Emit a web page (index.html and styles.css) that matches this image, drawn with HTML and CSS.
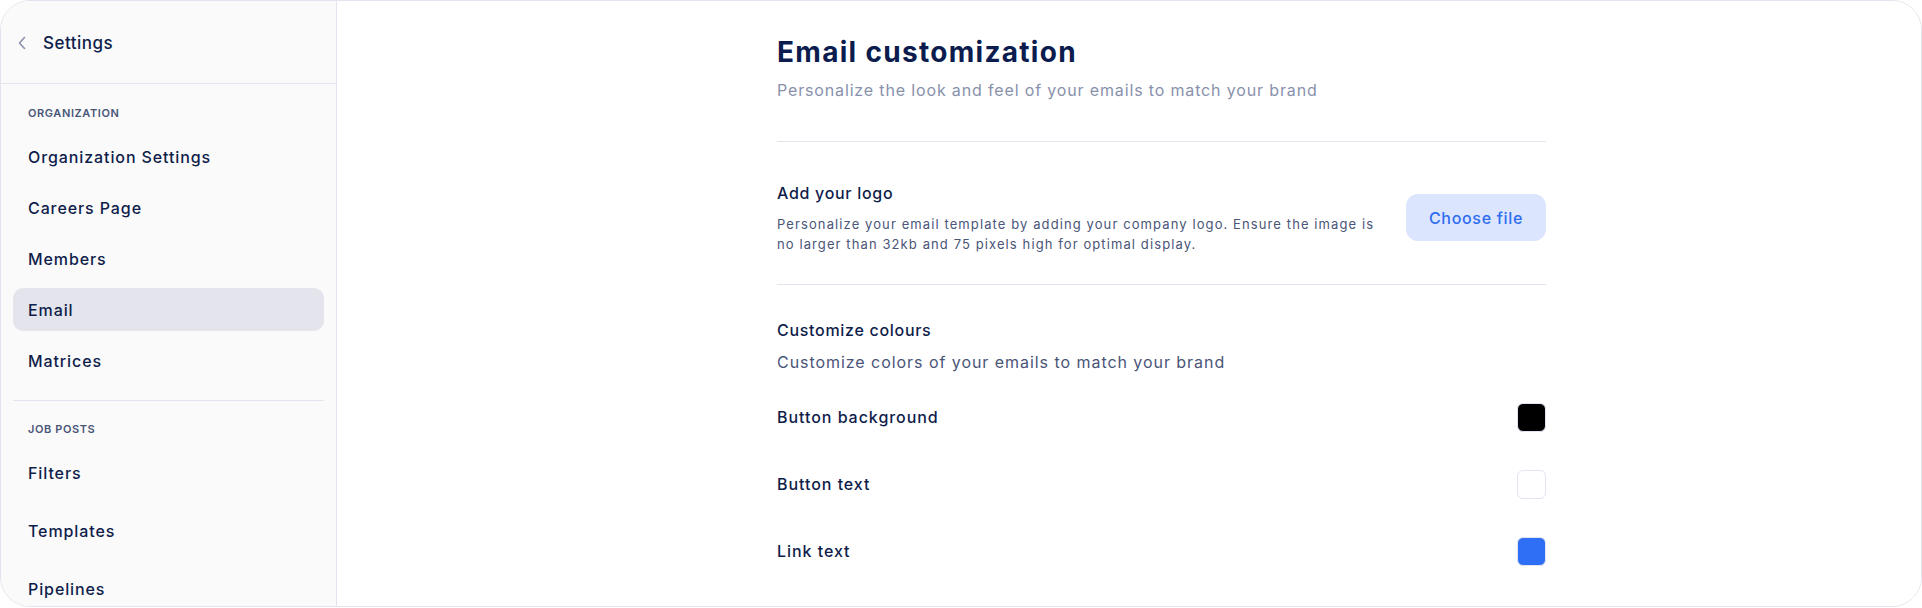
FILE: index.html
```html
<!DOCTYPE html>
<html lang="en">
<head>
<meta charset="utf-8">
<title>Email customization</title>
<link rel="stylesheet" href="styles.css">
</head>
<body>
<div class="frame">
  <aside class="sidebar">
    <div class="side-header">
      <svg class="chev" width="10" height="14" viewBox="0 0 10 14" fill="none"><path d="M7.5 1.5 L2.5 7 L7.5 12.5" stroke="#8a91aa" stroke-width="1.6" stroke-linecap="round" stroke-linejoin="round"/></svg>
      <span class="side-title">Settings</span>
    </div>
    <nav class="nav">
      <div class="nav-label">ORGANIZATION</div>
      <ul class="nav-list">
        <li class="nav-item">Organization Settings</li>
        <li class="nav-item">Careers Page</li>
        <li class="nav-item">Members</li>
        <li class="nav-item active">Email</li>
        <li class="nav-item">Matrices</li>
      </ul>
      <div class="nav-divider"></div>
      <div class="nav-label">JOB POSTS</div>
      <ul class="nav-list wide">
        <li class="nav-item">Filters</li>
        <li class="nav-item">Templates</li>
        <li class="nav-item">Pipelines</li>
      </ul>
    </nav>
  </aside>
  <main class="main">
    <div class="content">
      <h1 class="title">Email customization</h1>
      <p class="subtitle">Personalize the look and feel of your emails to match your brand</p>
      <section class="section logo-section">
        <div class="logo-text">
          <h2 class="sec-title">Add your logo</h2>
          <p class="sec-desc">Personalize your email template by adding your company logo. Ensure the image is no larger than 32kb and 75 pixels high for optimal display.</p>
        </div>
        <button class="choose-btn">Choose file</button>
      </section>
      <section class="section colors-section">
        <h2 class="sec-title">Customize colours</h2>
        <p class="sec-sub">Customize colors of your emails to match your brand</p>
        <div class="color-rows">
          <div class="color-row"><span class="color-label">Button background</span><span class="swatch swatch-black"></span></div>
          <div class="color-row"><span class="color-label">Button text</span><span class="swatch swatch-white"></span></div>
          <div class="color-row"><span class="color-label">Link text</span><span class="swatch swatch-blue"></span></div>
        </div>
      </section>
    </div>
  </main>
</div>
</body>
</html>
```
FILE: styles.css
```css
* { box-sizing: border-box; }
html, body { margin: 0; padding: 0; background: #ffffff; }
body {
  font-family: "Inter", "Noto Sans", sans-serif;
  color: #0f1d4a;
  height: 608px;
  overflow: hidden;
}
.frame {
  height: 607px;
  border: 1px solid #e3e5ee;
  border-radius: 30px;
  display: flex;
  overflow: hidden;
  background: #ffffff;
}
.sidebar {
  width: 336px;
  flex: none;
  background: #fafafb;
  border-right: 1px solid #e3e5ee;
}
.side-header {
  height: 83px;
  border-bottom: 1px solid #e3e5ee;
  display: flex;
  align-items: center;
  padding-left: 16px;
  padding-top: 2px;
}
.chev { display: block; margin-right: 16px; }
.side-title {
  font-size: 17px;
  font-weight: 500;
  letter-spacing: 0.5px;
  color: #0f1d4a;
}
.nav { padding: 21px 12px 0 12px; }
.nav-label {
  font-size: 11px;
  line-height: 16px;
  font-weight: 600;
  color: #4a5578;
  letter-spacing: 0.6px;
  padding-left: 15px;
}
.nav-list {
  list-style: none;
  margin: 14px 0 0 0;
  padding: 0;
  display: flex;
  flex-direction: column;
  gap: 8px;
}
.nav-list.wide { gap: 15px; }
.nav-item {
  height: 43px;
  display: flex;
  align-items: center;
  padding-left: 15px;
  border-radius: 10px;
  font-size: 16px;
  font-weight: 500;
  letter-spacing: 0.9px;
  color: #0f1d4a;
}
.nav-item.active { background: #e4e5ec; }
.nav-divider {
  height: 1px;
  background: #e3e5ee;
  margin: 18px 0 20px 0;
}
.main {
  flex: 1;
  background: #ffffff;
}
.content {
  width: 769px;
  margin-left: 440px;
  padding-top: 33px;
}
.title {
  margin: 0;
  font-size: 28px;
  line-height: 36px;
  font-weight: 700;
  letter-spacing: 1.3px;
  color: #0c1c4e;
}
.subtitle {
  margin: 8px 0 0 0;
  font-size: 16px;
  line-height: 24px;
  letter-spacing: 0.85px;
  color: #8891ab;
  padding-bottom: 39px;
  border-bottom: 1px solid #e3e5ee;
}
.section { border-bottom: 1px solid #e3e5ee; }
.logo-section {
  display: flex;
  align-items: center;
  justify-content: space-between;
  padding: 39px 0 30px 0;
}
.logo-text { width: 614px; }
.sec-title {
  margin: 0;
  font-size: 16px;
  line-height: 24px;
  font-weight: 500;
  letter-spacing: 0.7px;
  color: #0f1d4a;
}
.sec-desc {
  margin: 9px 0 0 0;
  font-size: 13px;
  line-height: 20px;
  letter-spacing: 1.1px;
  color: #4a5578;
}
.choose-btn {
  width: 140px;
  height: 47px;
  border: none;
  border-radius: 12px;
  background: #dbe5fd;
  color: #2f6df0;
  font-family: inherit;
  font-size: 16px;
  font-weight: 500;
  letter-spacing: 0.7px;
  padding: 0;
}
.colors-section { padding: 33px 0 33px 0; }
.sec-sub {
  margin: 8px 0 0 0;
  font-size: 16px;
  line-height: 24px;
  letter-spacing: 0.95px;
  color: #4a5578;
}
.color-rows {
  margin-top: 21px;
  display: flex;
  flex-direction: column;
  gap: 23px;
}
.color-row {
  height: 44px;
  display: flex;
  align-items: center;
  justify-content: space-between;
}
.color-label {
  font-size: 16px;
  font-weight: 500;
  letter-spacing: 0.95px;
  color: #0f1d4a;
}
.swatch {
  width: 29px;
  height: 29px;
  border-radius: 6px;
  border: 1px solid #e3e4ef;
}
.swatch-black { background: #000000; }
.swatch-white { background: #ffffff; }
.swatch-blue { background: #2f6ff5; }
```
